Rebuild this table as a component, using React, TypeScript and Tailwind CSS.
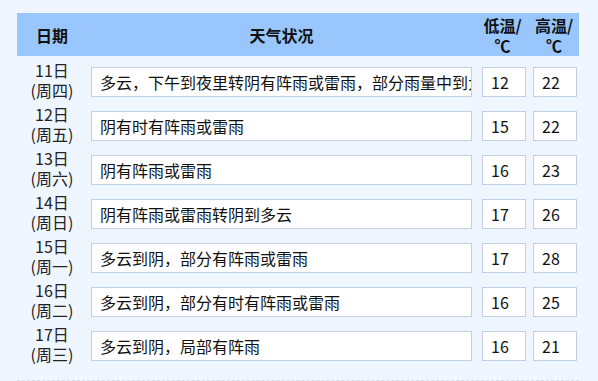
import React from "react";

const rows = [
  { d: "11日", w: "(周四)", text: "多云，下午到夜里转阴有阵雨或雷雨，部分雨量中到大雨", lo: "12", hi: "22" },
  { d: "12日", w: "(周五)", text: "阴有时有阵雨或雷雨", lo: "15", hi: "22" },
  { d: "13日", w: "(周六)", text: "阴有阵雨或雷雨", lo: "16", hi: "23" },
  { d: "14日", w: "(周日)", text: "阴有阵雨或雷雨转阴到多云", lo: "17", hi: "26" },
  { d: "15日", w: "(周一)", text: "多云到阴，部分有阵雨或雷雨", lo: "17", hi: "28" },
  { d: "16日", w: "(周二)", text: "多云到阴，部分有时有阵雨或雷雨", lo: "16", hi: "25" },
  { d: "17日", w: "(周三)", text: "多云到阴，局部有阵雨", lo: "16", hi: "21" },
];

const font = { fontFamily: '"Microsoft YaHei", "Noto Sans CJK SC", "Noto Sans", sans-serif' };

export default function App() {
  return (
    <div className="w-[598px] h-[381px] bg-[#eff6ff] overflow-hidden" style={font}>
      <div className="pt-[13px] pl-[17px] w-[579px]">
        <div className="border-b border-dashed border-[#d3deec] pb-[14px]">
          <div className="flex h-[43px] bg-[#99c7fd] text-[16px] font-bold text-[#111] leading-[20px]">
            <div className="w-[70px] flex items-center justify-center">日期</div>
            <div className="w-[389px] flex items-center justify-center">天气状况</div>
            <div className="w-[53px] flex flex-col items-center justify-center text-center">
              <span>低温/</span>
              <span>℃</span>
            </div>
            <div className="w-[50px] flex flex-col items-center justify-center text-center">
              <span>高温/</span>
              <span>℃</span>
            </div>
          </div>
          <div className="pt-[2px]">
            {rows.map((r) => (
              <div key={r.d} className="flex h-[44px] items-center">
                <div className="w-[70px] flex flex-col items-center text-[16px] leading-[20px] text-[#222]">
                  <span>{r.d}</span>
                  <span>{r.w}</span>
                </div>
                <div className="ml-[4px] mt-[4px] w-[381px] h-[30px] bg-white border border-[#bfd1e8] px-2 flex items-center overflow-hidden whitespace-nowrap text-[16px] text-[#111]">
                  {r.text}
                </div>
                <div className="ml-[10px] mt-[4px] w-[44px] h-[30px] bg-white border border-[#bfd1e8] px-2 flex items-center text-[16px] text-[#111]">
                  {r.lo}
                </div>
                <div className="ml-[7px] mt-[4px] w-[44px] h-[30px] bg-white border border-[#bfd1e8] px-2 flex items-center text-[16px] text-[#111]">
                  {r.hi}
                </div>
              </div>
            ))}
          </div>
        </div>
      </div>
    </div>
  );
}
